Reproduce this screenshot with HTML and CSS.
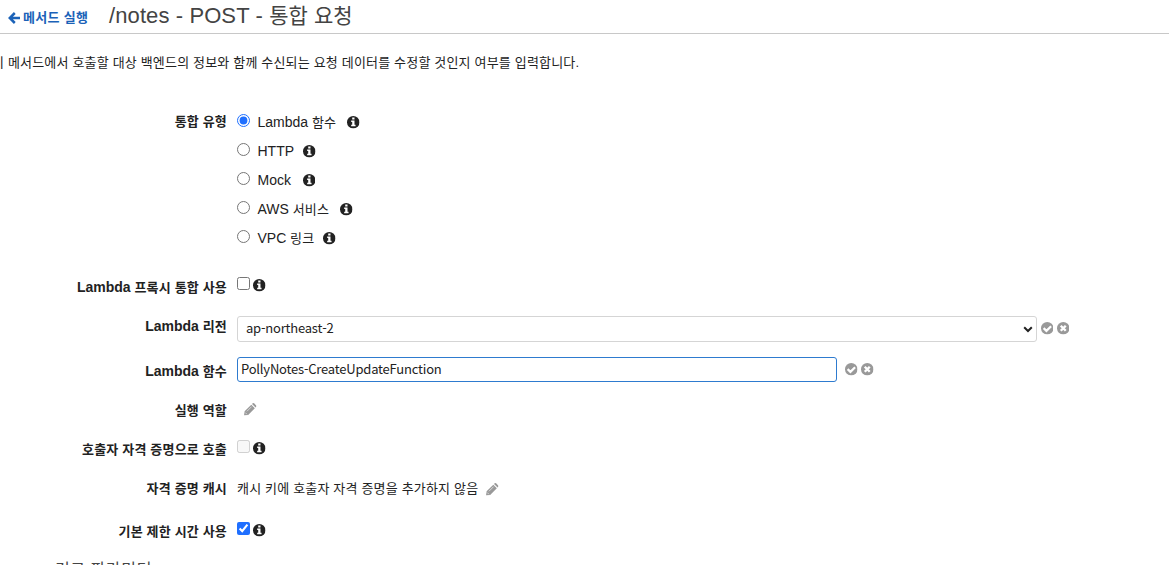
FILE: index.html
```html
<!DOCTYPE html>
<html lang="ko">
<head>
<meta charset="utf-8">
<title>통합 요청</title>
<link rel="stylesheet" href="styles.css">
</head>
<body>
<svg class="defs" width="0" height="0">
  <symbol id="info" viewBox="0 0 12 12"><circle cx="6" cy="6" r="6" fill="currentColor"/><path d="M5 1.500h2.200v1.800H5zM4 4.300h3.200v4.100H8.200v1.500H4V8.400h1V5.800H4z" fill="#fff"/></symbol>
  <symbol id="ok" viewBox="0 0 12 12"><circle cx="6" cy="6" r="6" fill="currentColor"/><path d="M2.500 5.900l2.700 2.600 4.500-4.500" fill="none" stroke="#fff" stroke-width="2.100"/></symbol>
  <symbol id="no" viewBox="0 0 12 12"><circle cx="6" cy="6" r="6" fill="currentColor"/><path d="M3.600 3.600l4.800 4.800M8.400 3.600L3.600 8.400" fill="none" stroke="#fff" stroke-width="2.300"/></symbol>
  <symbol id="pencil" viewBox="0 0 12 12"><path d="M0 12l.6-4L7 1.600 10.400 5 4 11.400zM7.700.9l.6-.6q.7-.6 1.400 0l2 2q.6.7 0 1.400l-.6.6z" fill="currentColor"/><path d="M1.200 9.200l1.600 1.600M2.800 8L7.300 3.500" stroke="#fff" stroke-width=".6"/></symbol>
</svg>
<header class="head">
  <a class="back"><svg class="arrow" viewBox="0 0 12 12"><path d="M12 6H2M6.800 1L1.800 6l5 5" fill="none" stroke="currentColor" stroke-width="2.500"/></svg><span>메서드 실행</span></a>
  <h1 class="title">/notes - POST - <span class="title-ko">통합 요청</span></h1>
</header>
<p class="intro">이 메서드에서 호출할 대상 백엔드의 정보와 함께 수신되는 요청 데이터를 수정할 것인지 여부를 입력합니다.</p>
<main class="form">
  <div class="row types">
    <div class="label">통합 유형</div>
    <div class="options">
      <label class="option"><input type="radio" name="t" checked><span><span class="en">Lambda</span> 함수</span><svg class="icon"><use href="#info"/></svg></label>
      <label class="option http"><input type="radio" name="t"><span class="en">HTTP</span><svg class="icon"><use href="#info"/></svg></label>
      <label class="option mock"><input type="radio" name="t"><span class="en">Mock</span><svg class="icon"><use href="#info"/></svg></label>
      <label class="option"><input type="radio" name="t"><span><span class="en">AWS</span> 서비스</span><svg class="icon"><use href="#info"/></svg></label>
      <label class="option vpc"><input type="radio" name="t"><span><span class="en">VPC</span> 링크</span><svg class="icon"><use href="#info"/></svg></label>
    </div>
  </div>
  <div class="row proxy">
    <div class="label"><span class="en">Lambda</span> 프록시 통합 사용</div>
    <input class="check" type="checkbox"><svg class="icon"><use href="#info"/></svg>
  </div>
  <div class="row region">
    <div class="label"><span class="en">Lambda</span> 리전</div>
    <div class="select"><span class="value">ap-northeast-2</span><svg class="chevron" viewBox="0 0 10 7"><path d="M1.200 1.300L5 5l3.800-3.700" fill="none" stroke="#222" stroke-width="2"/></svg></div>
    <svg class="icon gray"><use href="#ok"/></svg><svg class="icon gray"><use href="#no"/></svg>
  </div>
  <div class="row function">
    <div class="label"><span class="en">Lambda</span> 함수</div>
    <input class="field" type="text" value="PollyNotes-CreateUpdateFunction">
    <svg class="icon gray"><use href="#ok"/></svg><svg class="icon gray"><use href="#no"/></svg>
  </div>
  <div class="row role">
    <div class="label">실행 역할</div>
    <svg class="icon gray"><use href="#pencil"/></svg>
  </div>
  <div class="row caller">
    <div class="label">호출자 자격 증명으로 호출</div>
    <input class="check" type="checkbox" disabled><svg class="icon"><use href="#info"/></svg>
  </div>
  <div class="row cache">
    <div class="label">자격 증명 캐시</div>
    <span class="cache-value">캐시 키에 호출자 자격 증명을 추가하지 않음</span><svg class="icon gray"><use href="#pencil"/></svg>
  </div>
  <div class="row timeout">
    <div class="label">기본 제한 시간 사용</div>
    <input class="check" type="checkbox" checked><svg class="icon"><use href="#info"/></svg>
  </div>
  <h2 class="section">경로 파라미터</h2>
</main>
</body>
</html>
```
FILE: styles.css
```css
html, body { height: 565px; overflow: hidden; }
body {
  margin: 0;
  background: #fff;
  color: #222;
  font: 13px/20px "Liberation Sans", "Noto Sans CJK KR", sans-serif;
  letter-spacing: .18px;
}
.defs { position: absolute; }
.en { font-size: 14px; letter-spacing: 0; }
.head {
  display: flex;
  box-sizing: border-box;
  height: 34px;
  padding-left: 8px;
  border-bottom: 1px solid #c8c8c8;
}
.back { display: flex; width: 101px; padding-top: 8px; color: #1b62b8; font-weight: 700; letter-spacing: .3px; }
.arrow { width: 12px; height: 12px; margin: 4px 3px 0 0; }
.title { margin: 0; padding-top: 1px; font-size: 22px; line-height: 29px; font-weight: 400; color: #444; letter-spacing: .1px; white-space: nowrap; }
.title-ko { font-size: 21px; }
.intro { margin: 19px 0 0 -8px; white-space: nowrap; }
.form { padding-top: 39px; }
.row { display: flex; align-items: flex-start; }
.label { width: 227px; margin-right: 10px; text-align: right; font-weight: 700; flex: none; white-space: nowrap; }
.icon { width: 12.500px; height: 12.500px; flex: none; }
.gray { color: #999; }
.types { height: 165px; }
.option { display: flex; height: 29px; white-space: nowrap; }
.option input { width: 13px; height: 13px; margin: 2px 7.500px 0 0; accent-color: #1f6fff; }
.option .icon { margin: 4px 0 0 11px; }
.option.http .icon { margin-left: 9px; }
.option.mock .icon { margin-left: 12px; }
.option.vpc .icon { margin-left: 9px; }
.check { width: 13px; height: 13px; margin: 0 3px 0 0; accent-color: #1f6fff; }
.proxy { height: 39px; }
.proxy .icon { margin-top: 2px; }
.region { height: 41px; }
.select {
  display: flex;
  justify-content: space-between;
  box-sizing: border-box;
  width: 800px;
  height: 26px;
  padding: 0 3px 0 8px;
  border: 1px solid #d5d5d5;
  border-radius: 3px;
  font: 13px/22px "Noto Sans CJK KR", sans-serif;
  letter-spacing: -.2px;
}
.chevron { width: 10px; height: 7px; margin-top: 9px; }
.region .icon { margin: 6px 0 0 3.500px; }
.function { height: 44px; }
.field {
  box-sizing: border-box;
  width: 600px;
  height: 25px;
  margin: 0 4.500px 0 0;
  padding: 0 3px 2px;
  border: 1px solid #2e7bcf;
  border-radius: 3px;
  color: #222;
  font: 13px/20px "Noto Sans CJK KR", sans-serif;
  letter-spacing: -.2px;
}
.function .icon { margin: 6px 0 0 3.500px; }
.function .label { padding-top: 4px; }
.role { height: 39px; }
.role .icon { margin: 2px 0 0 7px; }
.caller { height: 39px; }
.caller .icon { margin-top: 2px; }
.cache { height: 43px; }
.cache .icon { margin: 4px 0 0 8px; }
.timeout { height: 36px; }
.timeout .icon { margin-top: 2px; }
.section { margin: 0 0 0 55px; font-size: 16px; font-weight: 400; line-height: 24px; color: #444; letter-spacing: .6px; }
```
